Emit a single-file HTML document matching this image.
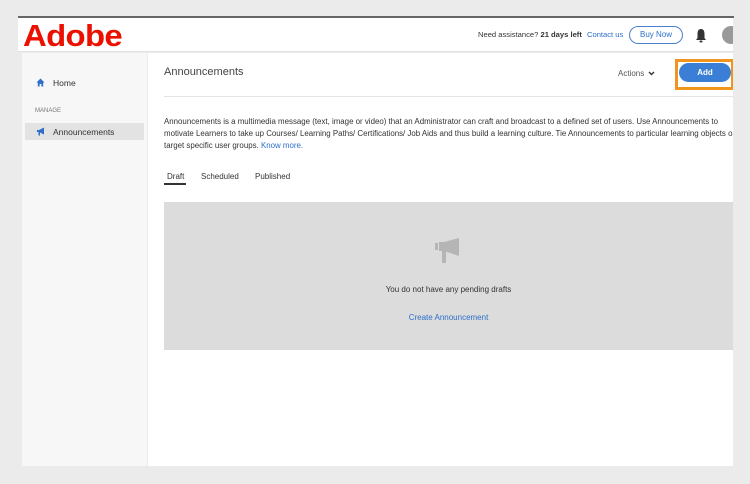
<!DOCTYPE html>
<html><head><meta charset="utf-8"><style>
*{margin:0;padding:0;box-sizing:border-box}
body{width:750px;height:484px;background:#ebebeb;position:relative;overflow:hidden;font-family:"Liberation Sans",sans-serif;color:#333}
.a{position:absolute}
</style></head><body>
<div class="a" style="left:18px;top:16px;width:716px;height:2px;background:#666"></div>
<div class="a" style="left:18px;top:18px;width:716px;height:34px;background:#fff;border-bottom:1px solid #e2e2e2"></div>
<div class="a" style="left:23px;top:18px;font-size:31px;font-weight:bold;color:#eb1000;letter-spacing:-0.6px;line-height:36px;transform:scaleX(1.06);transform-origin:left">Adobe</div>
<div class="a" style="left:478px;top:30px;font-size:7.6px;color:#333;white-space:nowrap">Need assistance? <b>21 days left</b></div>
<div class="a" style="left:587px;top:30px;font-size:7.6px;color:#2d6fc9">Contact us</div>
<div class="a" style="left:629px;top:26px;width:54px;height:18px;border:1px solid #4b7fd0;border-radius:9px;font-size:8px;color:#2d6fc9;text-align:center;line-height:16px">Buy Now</div>
<svg class="a" style="left:695px;top:28px" width="12" height="16" viewBox="0 0 12 16"><path d="M6 1C3.5 1 2.5 3 2.5 6V10L1 12H11L9.5 10V6C9.5 3 8.5 1 6 1Z" fill="#333"/><rect x="4.5" y="12.5" width="3" height="2" rx="1" fill="#333"/></svg>
<div class="a" style="left:722px;top:26px;width:18px;height:18px;border-radius:50%;background:#999"></div>
<div class="a" style="left:22px;top:53px;width:126px;height:413px;background:#f7f7f7;border-right:1px solid #ececec"></div>
<div class="a" style="left:148px;top:53px;width:585px;height:413px;background:#fff"></div>
<svg class="a" style="left:36px;top:78px" width="9" height="9" viewBox="0 0 9 9"><path d="M4.5 0.5L0.5 4.5H1.8V8.5H3.6V6H5.4V8.5H7.2V4.5H8.5Z" fill="#2d6fc9"/></svg>
<div class="a" style="left:53px;top:78px;font-size:8.5px">Home</div>
<div class="a" style="left:35px;top:108px;font-size:6px;color:#777">MANAGE</div>
<div class="a" style="left:25px;top:123px;width:119px;height:17px;background:#e3e3e3"></div>
<svg class="a" style="left:36px;top:127px" width="10" height="9" viewBox="0 0 10 9"><path d="M1 3H3L8 0.5V7.5L3 5H1Z" fill="#2d6fc9"/><rect x="2.5" y="5" width="1.5" height="3.5" fill="#2d6fc9"/></svg>
<div class="a" style="left:53px;top:127px;font-size:8.5px">Announcements</div>
<div class="a" style="left:164px;top:66px;font-size:11px;color:#444">Announcements</div>
<div class="a" style="left:618px;top:69px;font-size:8px;color:#555">Actions</div>
<svg class="a" style="left:648px;top:71px" width="7" height="5" viewBox="0 0 7 5"><path d="M1 1L3.5 3.5L6 1" stroke="#333" stroke-width="1.4" fill="none"/></svg>
<div class="a" style="left:675px;top:59px;width:59px;height:31px;border:3px solid #f0961e"></div>
<div class="a" style="left:679px;top:63px;width:52px;height:19px;border-radius:10px;background:#3a7fd5;color:#fff;font-size:8px;font-weight:bold;text-align:center;line-height:19px">Add</div>
<div class="a" style="left:164px;top:96px;width:569px;height:1px;background:#e4e4e4"></div>
<div class="a" style="left:164px;top:116px;font-size:7.9px;line-height:12px;white-space:nowrap;color:#333">Announcements is a multimedia message (text, image or video) that an Administrator can craft and broadcast to a defined set of users. Use Announcements to<br>motivate Learners to take up Courses/ Learning Paths/ Certifications/ Job Aids and thus build a learning culture. Tie Announcements to particular learning objects or<br>target specific user groups. <span style="color:#2d6fc9">Know more.</span></div>
<div class="a" style="left:167px;top:172px;font-size:8px">Draft</div>
<div class="a" style="left:164px;top:183px;width:22px;height:1.5px;background:#333"></div>
<div class="a" style="left:201px;top:172px;font-size:8px">Scheduled</div>
<div class="a" style="left:255px;top:172px;font-size:8px">Published</div>
<div class="a" style="left:164px;top:202px;width:569px;height:148px;background:#dcdcdc"></div>
<svg class="a" style="left:434px;top:237px" width="28" height="28" viewBox="0 0 28 28"><rect x="1" y="6" width="3" height="7" fill="#b5b5b5"/><path d="M5 5H10L25 1V19L10 14H5Z" fill="#b5b5b5"/><rect x="8" y="14" width="4" height="12" fill="#b5b5b5"/></svg>
<div class="a" style="left:164px;top:285px;width:569px;text-align:center;font-size:8px;color:#333">You do not have any pending drafts</div>
<div class="a" style="left:164px;top:313px;width:569px;text-align:center;font-size:8px;color:#2d6fc9">Create Announcement</div>
<div class="a" style="left:733px;top:18px;width:17px;height:466px;background:#ebebeb"></div>
</body></html>
